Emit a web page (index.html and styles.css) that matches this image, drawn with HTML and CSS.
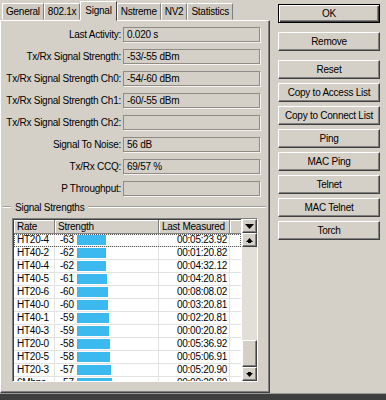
FILE: index.html
```html
<!DOCTYPE html>
<html lang="en">
<head>
    <meta charset="UTF-8">
    <title>Registration Entry - Signal</title>
    <link rel="stylesheet" href="styles.css">
</head>
<body>

<div class="window">
    <div class="main">
        <div class="tabs">
            <div class="tab">General</div>
            <div class="tab">802.1x</div>
            <div class="tab active">Signal</div>
            <div class="tab">Nstreme</div>
            <div class="tab">NV2</div>
            <div class="tab">Statistics</div>
        </div>

        <div class="panel">
            <div class="field"><label>Last Activity:</label><div class="box">0.020 s</div></div>
            <div class="field"><label>Tx/Rx Signal Strength:</label><div class="box">-53/-55 dBm</div></div>
            <div class="field"><label>Tx/Rx Signal Strength Ch0:</label><div class="box">-54/-60 dBm</div></div>
            <div class="field"><label>Tx/Rx Signal Strength Ch1:</label><div class="box">-60/-55 dBm</div></div>
            <div class="field"><label>Tx/Rx Signal Strength Ch2:</label><div class="box"></div></div>
            <div class="field"><label>Signal To Noise:</label><div class="box">56 dB</div></div>
            <div class="field"><label>Tx/Rx CCQ:</label><div class="box">69/57 %</div></div>
            <div class="field"><label>P Throughput:</label><div class="box"></div></div>

            <div class="group-title"><span>Signal Strengths</span></div>

            <div class="list">
                <div class="rows">
                    <div class="row head">
                        <div class="cell">Rate</div>
                        <div class="cell">Strength</div>
                        <div class="cell">Last Measured</div>
                        <div class="cell"></div>
                    </div>
                    <div class="row focus">
                        <div class="cell">HT20-4</div>
                        <div class="cell strength"><span class="val">-63</span><span class="bar" style="width:29px"></span></div>
                        <div class="cell time">00:05:23.92</div>
                        <div class="cell"></div>
                    </div>
                    <div class="row">
                        <div class="cell">HT40-2</div>
                        <div class="cell strength"><span class="val">-62</span><span class="bar" style="width:29px"></span></div>
                        <div class="cell time">00:01:20.82</div>
                        <div class="cell"></div>
                    </div>
                    <div class="row">
                        <div class="cell">HT40-4</div>
                        <div class="cell strength"><span class="val">-62</span><span class="bar" style="width:29px"></span></div>
                        <div class="cell time">00:04:32.12</div>
                        <div class="cell"></div>
                    </div>
                    <div class="row">
                        <div class="cell">HT40-5</div>
                        <div class="cell strength"><span class="val">-61</span><span class="bar" style="width:30px"></span></div>
                        <div class="cell time">00:04:20.81</div>
                        <div class="cell"></div>
                    </div>
                    <div class="row">
                        <div class="cell">HT20-6</div>
                        <div class="cell strength"><span class="val">-60</span><span class="bar" style="width:31px"></span></div>
                        <div class="cell time">00:08:08.02</div>
                        <div class="cell"></div>
                    </div>
                    <div class="row">
                        <div class="cell">HT40-0</div>
                        <div class="cell strength"><span class="val">-60</span><span class="bar" style="width:31px"></span></div>
                        <div class="cell time">00:03:20.81</div>
                        <div class="cell"></div>
                    </div>
                    <div class="row">
                        <div class="cell">HT40-1</div>
                        <div class="cell strength"><span class="val">-59</span><span class="bar" style="width:32px"></span></div>
                        <div class="cell time">00:02:20.81</div>
                        <div class="cell"></div>
                    </div>
                    <div class="row">
                        <div class="cell">HT40-3</div>
                        <div class="cell strength"><span class="val">-59</span><span class="bar" style="width:32px"></span></div>
                        <div class="cell time">00:00:20.82</div>
                        <div class="cell"></div>
                    </div>
                    <div class="row">
                        <div class="cell">HT20-0</div>
                        <div class="cell strength"><span class="val">-58</span><span class="bar" style="width:33px"></span></div>
                        <div class="cell time">00:05:36.92</div>
                        <div class="cell"></div>
                    </div>
                    <div class="row">
                        <div class="cell">HT20-5</div>
                        <div class="cell strength"><span class="val">-58</span><span class="bar" style="width:33px"></span></div>
                        <div class="cell time">00:05:06.91</div>
                        <div class="cell"></div>
                    </div>
                    <div class="row">
                        <div class="cell">HT20-3</div>
                        <div class="cell strength"><span class="val">-57</span><span class="bar" style="width:34px"></span></div>
                        <div class="cell time">00:05:20.90</div>
                        <div class="cell"></div>
                    </div>
                    <div class="row">
                        <div class="cell">6Mbps</div>
                        <div class="cell strength"><span class="val">-57</span><span class="bar" style="width:35px"></span></div>
                        <div class="cell time">00:00:20.80</div>
                        <div class="cell"></div>
                    </div>
                </div>

                <div class="scroll">
                    <div class="sb-head">
                        <svg width="9" height="5" viewBox="0 0 9 5"><polygon points="0,0 9,0 4.5,5" fill="#000"/></svg>
                    </div>
                    <div class="sb-btn">
                        <svg width="7" height="5" viewBox="0 0 7 5"><polygon points="3.5,0 7,4 0,4" fill="#000"/><rect x="2" y="4" width="3" height="1" fill="#000"/></svg>
                    </div>
                    <div class="sb-track"></div>
                    <div class="sb-thumb"></div>
                    <div class="sb-btn">
                        <svg width="7" height="5" viewBox="0 0 7 5"><rect x="2" y="0" width="3" height="1" fill="#000"/><polygon points="0,1 7,1 3.5,5" fill="#000"/></svg>
                    </div>
                </div>
            </div>
        </div>
    </div>

    <div class="buttons">
        <div class="btn default">OK</div>
        <div class="btn spaced">Remove</div>
        <div class="btn spaced">Reset</div>
        <div class="btn">Copy to Access List</div>
        <div class="btn">Copy to Connect List</div>
        <div class="btn">Ping</div>
        <div class="btn">MAC Ping</div>
        <div class="btn">Telnet</div>
        <div class="btn">MAC Telnet</div>
        <div class="btn">Torch</div>
    </div>
</div>

<div class="statusbar"></div>

</body>
</html>
```

FILE: styles.css
```css
body {
    margin: 0;
    background-color: #d4d0c8;
    font-family: 'Liberation Sans', Arial, sans-serif;
    font-size: 10px;
    letter-spacing: -0.25px;
    color: #000;
    width: 386px;
    height: 400px;
    overflow: hidden;
}
.window {
    display: flex;
    height: 393px;
}
.main {
    width: 270px;
    display: flex;
    flex-direction: column;
}

/* tabs */
.tabs {
    display: flex;
    align-items: flex-end;
    height: 20px;
    padding-left: 2px;
}
.tab {
    height: 17px;
    line-height: 15px;
    padding: 0 3px;
    box-sizing: border-box;
    border: 1px solid;
    border-color: #fff #808080 transparent #fff;
    background-color: #cdc9c1;
}
.tab.active {
    height: 20px;
    line-height: 17px;
    margin-bottom: -1px;
    padding: 0 4px;
    background-color: #d4d0c8;
    border-bottom-color: #d4d0c8;
    border-right-color: #404040;
    position: relative;
    z-index: 1;
}

/* panel */
.panel {
    flex: 1;
    border: 1px solid;
    border-color: #fff #404040 #404040 #fff;
    box-shadow: inset -1px -1px 0 #808080;
    padding-top: 6px;
    display: flex;
    flex-direction: column;
}
.field {
    display: flex;
    align-items: center;
    height: 15px;
    margin-bottom: 7px;
}
.field label {
    width: 120px;
    margin-right: 2px;
    text-align: right;
    white-space: nowrap;
}
.box {
    width: 137px;
    height: 15px;
    box-sizing: border-box;
    border: 1px solid #8f8c85;
    box-shadow: 1px 1px 0 #f4f3f0;
    padding-left: 3px;
    line-height: 13px;
}
.group-title {
    display: flex;
    align-items: center;
    margin: -2px 3px 5px 2px;
    height: 12px;
}
.group-title::before,
.group-title::after {
    content: '';
    height: 0;
    border-top: 1px solid #a09d96;
    border-bottom: 1px solid #fff;
}
.group-title::before {
    width: 8px;
}
.group-title::after {
    flex: 1;
}
.group-title span {
    padding: 0 4px;
}

/* list */
.list {
    display: flex;
    margin-left: 11px;
    width: 246px;
    height: 164px;
    box-sizing: border-box;
    border: 1px solid;
    border-color: #808080 #fff #fff #808080;
    box-shadow: inset 1px 1px 0 #404040;
    background-color: #fff;
    overflow: hidden;
}
.rows {
    flex: 1;
    overflow: hidden;
    padding: 1px 0 0 1px;
}
.row {
    display: grid;
    grid-template-columns: 41px 104px 71px 12px;
    height: 13px;
}
.cell {
    box-sizing: border-box;
    border-right: 1px solid #e2e2e2;
    border-bottom: 1px solid #e2e2e2;
    padding-left: 3px;
    line-height: 12px;
    white-space: nowrap;
    overflow: hidden;
}
.row.head {
    height: 14px;
}
.row.head .cell {
    background-color: #d4d0c8;
    border-right: 1px solid #808080;
    border-bottom: 1px solid #808080;
    box-shadow: inset 1px 1px 0 #fff;
    line-height: 13px;
}
.row.focus {
    outline: 1px dotted #555;
    outline-offset: -1px;
}
.strength {
    display: flex;
    align-items: center;
    padding-left: 5px;
}
.val {
    width: 17px;
}
.bar {
    height: 10px;
    background-color: #3cb9ee;
}
.time {
    text-align: right;
    padding-right: 2px;
}

/* scrollbar */
.scroll {
    width: 15px;
    display: flex;
    flex-direction: column;
    background-color: #d4d0c8;
    border-left: 1px solid #fff;
}
.sb-head,
.sb-btn,
.sb-thumb {
    display: flex;
    align-items: center;
    justify-content: center;
    box-sizing: border-box;
    border: 1px solid;
    border-color: #fff #404040 #404040 #fff;
    box-shadow: inset -1px -1px 0 #808080;
    background-color: #d4d0c8;
}
.sb-head {
    height: 14px;
}
.sb-btn {
    height: 14px;
}
.sb-track {
    flex: 1;
    background-color: #e2dfd8;
}
.sb-thumb {
    height: 27px;
}

/* buttons */
.buttons {
    width: 102px;
    margin-left: 8px;
    padding-top: 4px;
    display: flex;
    flex-direction: column;
    gap: 4px;
}
.btn {
    height: 19px;
    box-sizing: border-box;
    border: 1px solid;
    border-color: #fff #404040 #404040 #fff;
    box-shadow: inset -1px -1px 0 #808080;
    text-align: center;
    line-height: 17px;
    white-space: nowrap;
}
.btn.default {
    border-color: #000;
    box-shadow: inset 1px 1px 0 #fff, inset -1px -1px 0 #404040, inset -2px -2px 0 #808080;
}
.btn.spaced {
    margin-top: 5px;
}

.statusbar {
    height: 7px;
    border-top: 1px solid #9a9a9a;
    background-color: #3e3e3e;
}
```
